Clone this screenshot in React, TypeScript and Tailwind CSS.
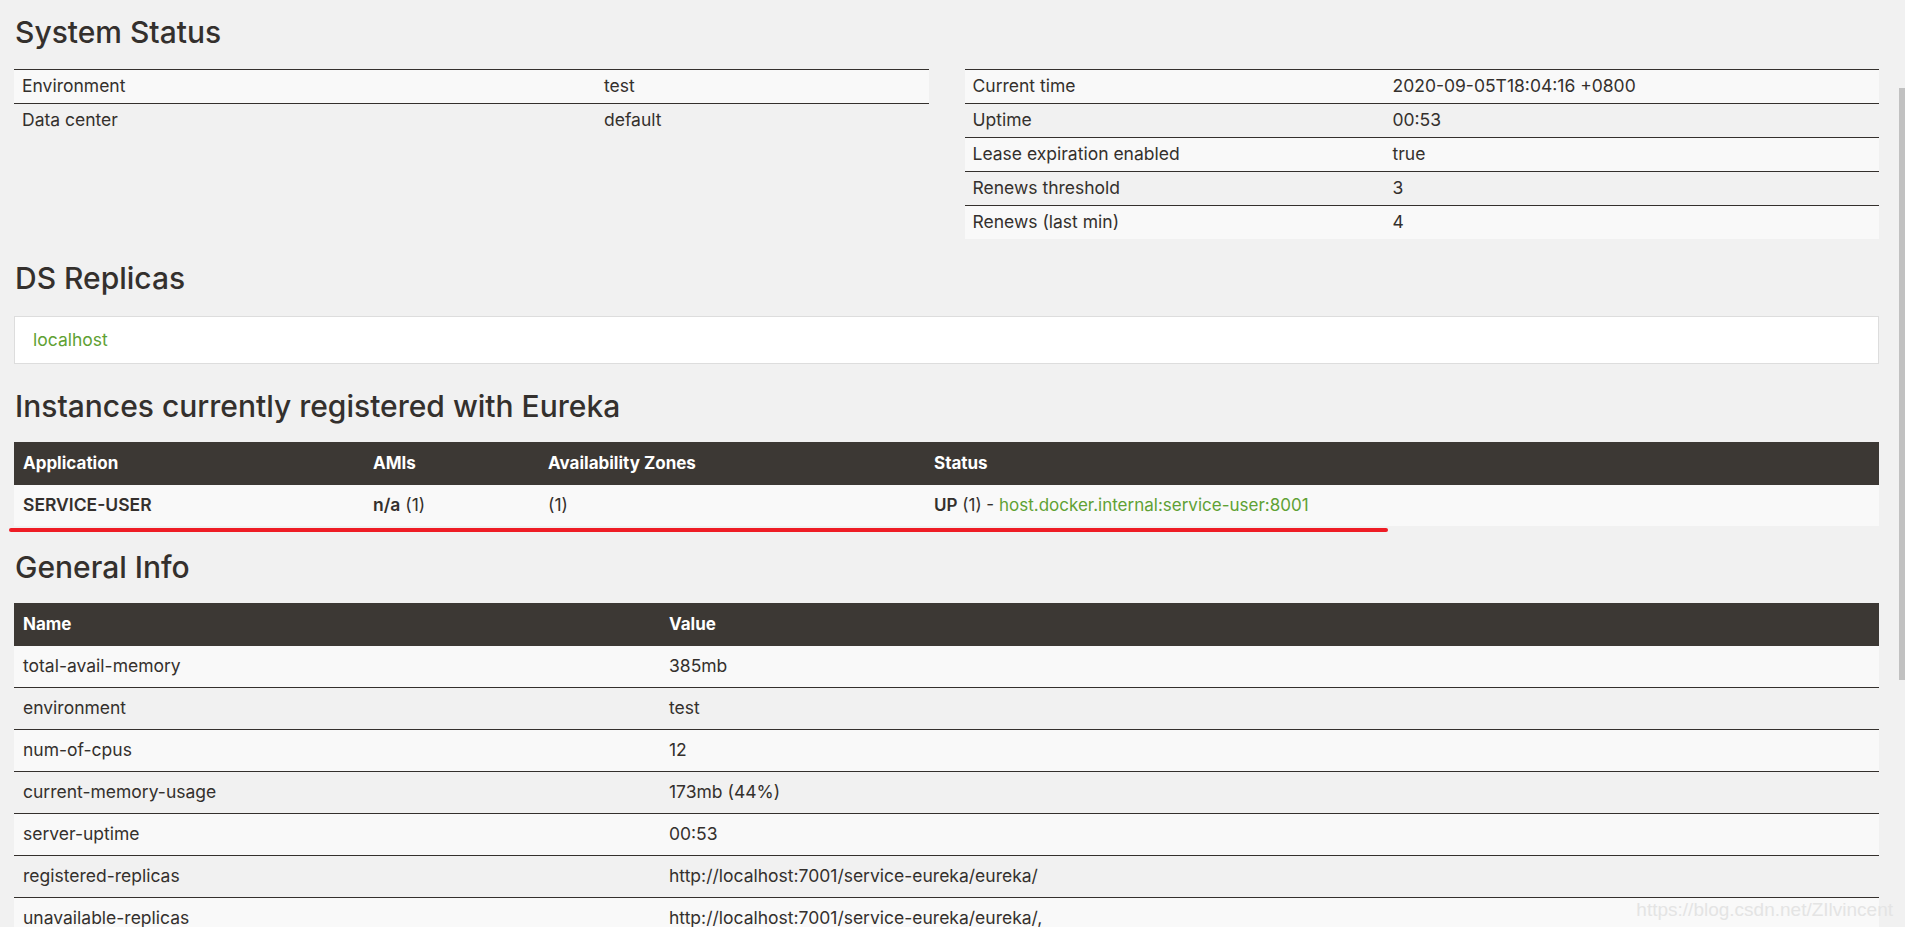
const font = { fontFamily: "Inter, 'Noto Sans', sans-serif" };

const envRows = [
  ["Environment", "test"],
  ["Data center", "default"],
];

const timeRows = [
  ["Current time", "2020-09-05T18:04:16 +0800"],
  ["Uptime", "00:53"],
  ["Lease expiration enabled", "true"],
  ["Renews threshold", "3"],
  ["Renews (last min)", "4"],
];

const generalRows = [
  ["total-avail-memory", "385mb"],
  ["environment", "test"],
  ["num-of-cpus", "12"],
  ["current-memory-usage", "173mb (44%)"],
  ["server-uptime", "00:53"],
  ["registered-replicas", "http://localhost:7001/service-eureka/eureka/"],
  ["unavailable-replicas", "http://localhost:7001/service-eureka/eureka/,"],
];

function Heading({ children, className = "" }: { children: React.ReactNode; className?: string }) {
  return (
    <h2 className={`text-[30px] leading-[32px] font-medium text-[#34302d] ${className}`}>
      {children}
    </h2>
  );
}

function StatusTable({ rows, firstCol }: { rows: string[][]; firstCol: string }) {
  return (
    <div>
      {rows.map(([k, v], i) => (
        <div
          key={k}
          className={`flex items-center h-[34px] border-t border-[#34302d] ${
            i % 2 === 0 ? "bg-[#f9f9f9]" : "bg-[#f1f1f1]"
          }`}
        >
          <div className={`${firstCol} shrink-0 px-2`}>{k}</div>
          <div className="px-2">{v}</div>
        </div>
      ))}
    </div>
  );
}

export default function App() {
  return (
    <div
      className="relative h-[927px] overflow-hidden bg-[#f1f1f1] pl-[14px] pr-[26px] pt-[16px] text-[17.5px] text-[#34302d]"
      style={font}
    >
      {/* System Status */}
      <Heading className="mb-[21px] pl-[1px]">System Status</Heading>
      <div className="grid grid-cols-2 gap-x-[36px] items-start">
        <StatusTable rows={envRows} firstCol="w-[582px]" />
        <StatusTable rows={timeRows} firstCol="w-[420px]" />
      </div>

      {/* DS Replicas */}
      <Heading className="mt-[23px] mb-[22px] pl-[1px]">DS Replicas</Heading>
      <div className="h-[48px] bg-white border border-[#dddddd] flex items-center px-[18px]">
        <a className="text-[#5fa134]">localhost</a>
      </div>

      {/* Instances */}
      <Heading className="mt-[26px] mb-[20px] pl-[1px]">Instances currently registered with Eureka</Heading>
      <div>
        <div className="grid grid-cols-[350px_175px_386px_1fr] h-[43px] items-center bg-[#3c3834] text-white font-bold text-[17px]">
          <div className="px-[9px]">Application</div>
          <div className="px-[9px]">AMIs</div>
          <div className="px-[9px]">Availability Zones</div>
          <div className="px-[9px]">Status</div>
        </div>
        <div className="grid grid-cols-[350px_175px_386px_1fr] h-[41px] items-center bg-[#f9f9f9]">
          <div className="px-[9px] font-semibold">SERVICE-USER</div>
          <div className="px-[9px]">
            <b className="font-semibold">n/a</b> (1)
          </div>
          <div className="px-[9px]">(1)</div>
          <div className="px-[9px] text-[17px]">
            <b className="font-semibold">UP</b> (1) -{" "}
            <a className="text-[#5fa134]">host.docker.internal:service-user:8001</a>
          </div>
        </div>
      </div>

      {/* General Info */}
      <Heading className="mt-[25px] mb-[20px] pl-[1px]">General Info</Heading>
      <div>
        <div className="grid grid-cols-[646px_1fr] h-[43px] items-center bg-[#3c3834] text-white font-bold text-[17px]">
          <div className="px-[9px]">Name</div>
          <div className="px-[9px]">Value</div>
        </div>
        {generalRows.map(([k, v], i) => (
          <div
            key={k}
            className={`grid grid-cols-[646px_1fr] h-[41px] box-content items-center ${
              i > 0 ? "border-t border-[#34302d]" : ""
            } ${i % 2 === 0 ? "bg-[#f9f9f9]" : "bg-[#f1f1f1]"}`}
          >
            <div className="px-[9px]">{k}</div>
            <div className="px-[9px]">{v}</div>
          </div>
        ))}
      </div>

      {/* red annotation line */}
      <div className="absolute left-[9px] top-[528px] w-[1379px] h-[4px] rounded-full bg-[#ee1c25]" />

      {/* watermark */}
      <div
        className="absolute right-[12px] top-[896px] text-[19px] text-[#e4e4e4]"
        style={{ fontFamily: "'Liberation Sans', sans-serif" }}
      >
        https://blog.csdn.net/ZIlvincent
      </div>

      {/* scrollbar */}
      <div className="absolute right-0 top-[88px] w-[6px] h-[592px] bg-[#c1c1c1]" />
    </div>
  );
}
